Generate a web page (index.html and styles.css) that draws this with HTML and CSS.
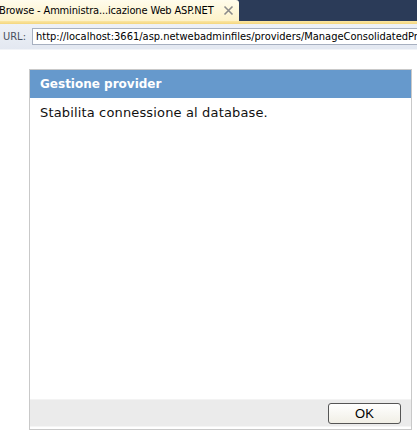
FILE: index.html
```html
<!DOCTYPE html>
<html>
<head>
<meta charset="utf-8">
<link rel="stylesheet" href="styles.css">
</head>
<body>
<div class="tabbar">
  <div class="tab">
    <span class="tab-title">Browse - Amministra...icazione Web ASP.NET</span>
    <svg class="tab-close" width="11" height="11" viewBox="0 0 11 11"><path d="M1.5 1.5 L9.5 9.5 M9.5 1.5 L1.5 9.5" stroke="#8a8a8a" stroke-width="1.6" fill="none"/></svg>
  </div>
  <div class="tab-rest"></div>
</div>
<div class="tabline"></div>
<div class="urlbar">
  <span class="url-label">URL:</span>
  <div class="url-input">http://localhost:3661/asp.netwebadminfiles/providers/ManageConsolidatedProviders.aspx</div>
</div>
<div class="page">
  <div class="dialog">
    <div class="dialog-header">Gestione provider</div>
    <div class="dialog-body">Stabilita connessione al database.</div>
    <div class="dialog-footer">
      <button class="ok-btn">OK</button>
    </div>
  </div>
</div>
</body>
</html>
```
FILE: styles.css
```css
html, body {
  margin: 0;
  padding: 0;
  background: #ffffff;
  width: 417px;
  height: 440px;
  overflow: hidden;
}
.tabbar {
  display: flex;
  height: 21px;
  background: #2b3b58;
}
.tab {
  width: 239px;
  flex: none;
  display: flex;
  align-items: center;
  background: linear-gradient(#fffcec, #fdf2c8);
  border-top-right-radius: 3px;
  box-sizing: border-box;
  font-family: "DejaVu Sans Condensed", "DejaVu Sans", sans-serif;
  font-size: 11px;
  color: #000;
  overflow: hidden;
}
.tab-title {
  white-space: nowrap;
  margin-left: -1px;
  letter-spacing: -0.15px;
}
.tab-close {
  margin-left: 9px;
}
.tab-rest {
  flex: 1;
}
.tabline {
  height: 3px;
  background: linear-gradient(#fbe6a2, #f4d67e);
}
.urlbar {
  display: flex;
  align-items: center;
  height: 25px;
  background: linear-gradient(#eef1f7, #e3e8f1);
  border-bottom: 1px solid #f2f4f8;
  font-family: "DejaVu Sans Condensed", "DejaVu Sans", sans-serif;
  font-size: 11px;
}
.url-label {
  width: 32px;
  padding-left: 3px;
  box-sizing: border-box;
  color: #4a5060;
}
.url-input {
  flex: 1;
  height: 17px;
  line-height: 16px;
  box-sizing: border-box;
  background: #fff;
  border: 1px solid #a7b0c0;
  border-right: none;
  padding-left: 3px;
  white-space: nowrap;
  overflow: hidden;
  color: #000;
}
.page {
  padding: 19px 5px 0 29px;
}
.dialog {
  height: 359px;
  border: 1px solid #c9c9c9;
  display: flex;
  flex-direction: column;
  font-family: "DejaVu Sans", Verdana, sans-serif;
}
.dialog-header {
  height: 28px;
  line-height: 28px;
  background: #6699cc;
  color: #fff;
  font-weight: bold;
  font-size: 12px;
  padding-left: 10px;
}
.dialog-body {
  flex: 1;
  padding: 7px 10px;
  font-size: 13px;
  letter-spacing: 0.15px;
  color: #111;
}
.dialog-footer {
  height: 26px;
  background: #ebebeb;
  border-top: 1px solid #f3f3f3;
  border-bottom: 1px solid #f5f5f5;
  margin-bottom: 2px;
  display: flex;
  justify-content: flex-end;
  align-items: center;
  padding-right: 10px;
}
.ok-btn {
  width: 73px;
  height: 21px;
  border: 1px solid #555;
  border-radius: 3px;
  background: linear-gradient(#ffffff, #f1efe6);
  font-family: "Liberation Sans", Arial, sans-serif;
  font-size: 13px;
  color: #000;
  padding: 0;
}
```
